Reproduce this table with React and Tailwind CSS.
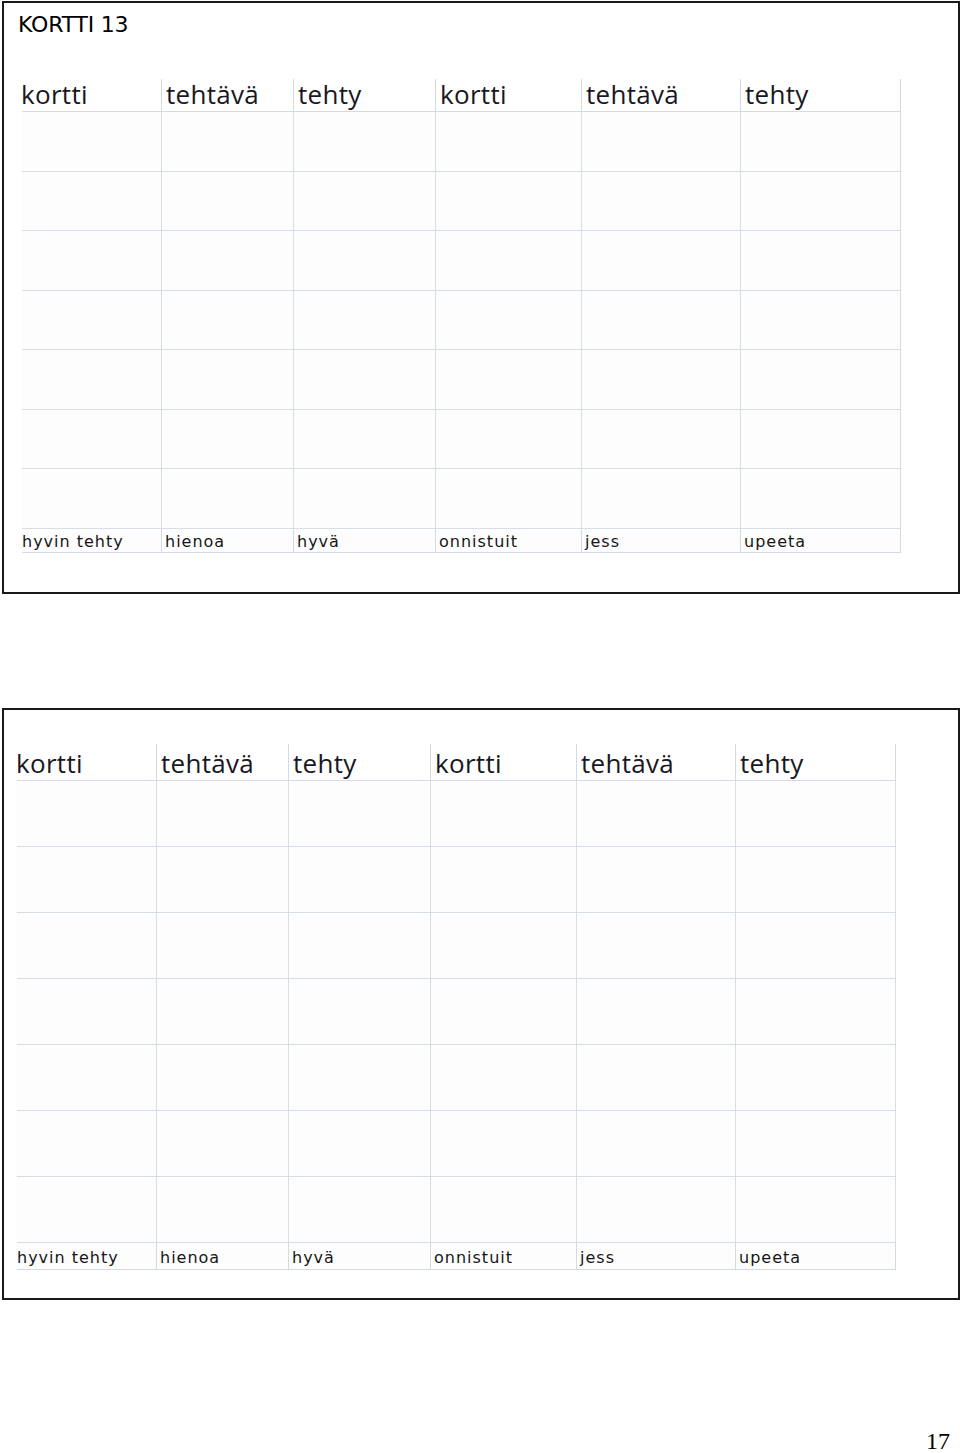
const headers = ["kortti", "tehtävä", "tehty", "kortti", "tehtävä", "tehty"];
const footers = ["hyvin tehty", "hienoa", "hyvä", "onnistuit", "jess", "upeeta"];
const bodyRows = [0, 1, 2, 3, 4, 5, 6];

function CardTable({ cols, headH, rowH, footH }) {
  return (
    <div className={`grid ${cols} bg-[#fdfdfd]`}>
      {headers.map((h, i) => (
        <div
          key={"h" + i}
          className={`${headH} flex items-end pb-[4px] border-b border-[#d3dae3] ${i > 0 ? "border-l" : ""} ${i === 5 ? "border-r" : ""} border-[#d3dae3] bg-white`}
        >
          <span className={`text-[26px] leading-none text-[#181822] font-['Open_Sans',sans-serif] tracking-[0.3px] ${i === 0 ? "-ml-[1px]" : "ml-[4px]"}`}>
            {h}
          </span>
        </div>
      ))}
      {bodyRows.map((r) =>
        headers.map((_, i) => (
          <div
            key={r + "-" + i}
            className={`${rowH} border-b border-[#d8dee6] ${i > 0 ? "border-l" : ""} ${i === 5 ? "border-r" : ""}`}
          />
        ))
      )}
      {footers.map((f, i) => (
        <div
          key={"f" + i}
          className={`${footH} flex items-center pt-[3px] border-b border-[#d3dae3] ${i > 0 ? "border-l" : ""} ${i === 5 ? "border-r" : ""} border-[#d3dae3]`}
        >
          <span className={`whitespace-nowrap text-[16px] leading-none tracking-[1px] text-[#161616] font-['DejaVu_Sans',sans-serif] ${i === 0 ? "ml-0" : "ml-[3px]"}`}>
            {f}
          </span>
        </div>
      ))}
    </div>
  );
}

export default function App() {
  return (
    <div className="relative w-[960px] h-[1453px] bg-white overflow-hidden">
      {/* slide 1 */}
      <div className="ml-[2px] mt-[1px] w-[958px] h-[593px] border-2 border-[#1a1a1a]">
        <div className="pl-[14px] pt-[11px] text-[22px] leading-none text-black font-['DejaVu_Sans',sans-serif] tracking-[-0.2px]">
          KORTTI 13
        </div>
        <div className="ml-[18px] mt-[43px] w-[880px]">
          <CardTable
            cols="grid-cols-[139px_132px_142px_146px_159px_161px]"
            headH="h-[33px]"
            rowH="h-[59.5px]"
            footH="h-[24px]"
          />
        </div>
      </div>

      {/* slide 2 */}
      <div className="ml-[2px] mt-[114px] w-[958px] h-[592px] border-2 border-[#1a1a1a]">
        <div className="ml-[13px] mt-[34px] w-[879px]">
          <CardTable
            cols="grid-cols-[139px_132px_142px_146px_159px_161px]"
            headH="h-[37px]"
            rowH="h-[66px]"
            footH="h-[27px]"
          />
        </div>
      </div>

      <div className="absolute right-[10px] bottom-0 text-[24px] leading-none text-black font-['Liberation_Serif',serif]">
        17
      </div>
    </div>
  );
}
